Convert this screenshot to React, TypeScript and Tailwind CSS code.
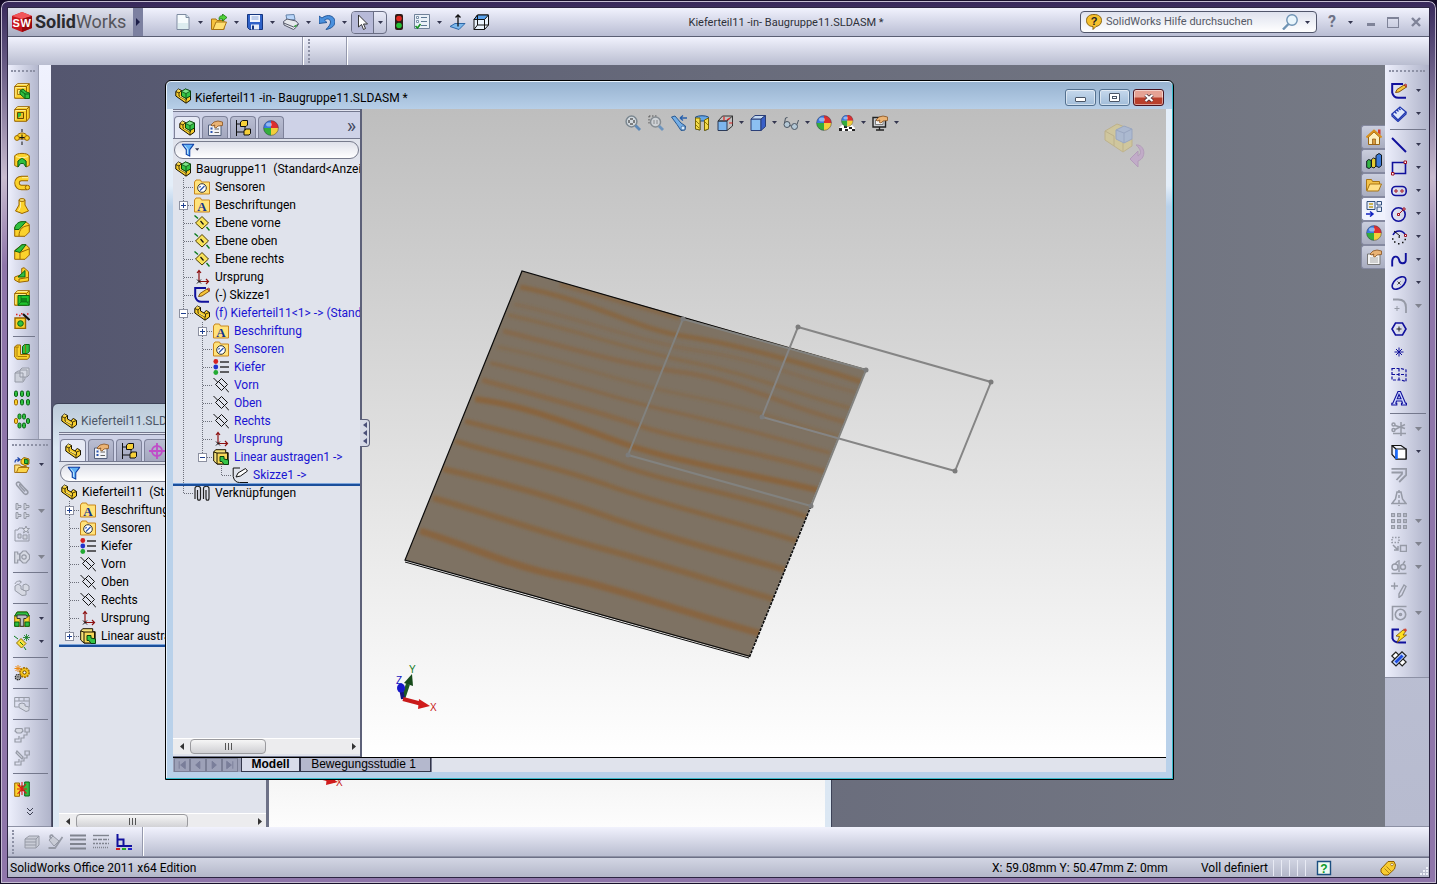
import { useState } from "react";
import type { ReactNode } from "react";

type Tool = { icon: string; label: string; menu?: boolean; disabled?: boolean } | "sep";
type Row = { level: number; icon: string; text: string; open?: boolean; linked?: boolean; last?: boolean; bar?: boolean };

const Y = { fill: "#fbd22c", stroke: "#9a6600" };
const G = { fill: "#2fbf3f", stroke: "#0b6416" };
const OFF = { fill: "none", stroke: "#969aa6" };
const NAVY = { fill: "none", stroke: "#10109c", strokeWidth: 1.6 };
const RED = { fill: "#fff", stroke: "#a01020" };

const hand = <path d="M4 5l3-3 4-1 4.5 1v3.500l-4.500.5-2 2-2-1 1-2-3 1z" fill="#eab374" stroke="#8a5320" strokeWidth=".8" />;
const ball = (
  <g>
    <path d="M8 8V.5A7.5 7.5 0 0 0 .5 8z" fill="#3a7ae0" />
    <path d="M8 8V.5A7.5 7.5 0 0 1 15.5 8z" fill="#dc2f2f" />
    <path d="M8 8H.5A7.5 7.5 0 0 0 8 15.500z" fill="#35ae3c" />
    <path d="M8 8h7.500A7.500 7.500 0 0 1 8 15.500z" fill="#f3cf3a" />
    <circle cx="8" cy="8" r="7.4" fill="none" stroke="#3b3b52" strokeWidth=".5" />
    <ellipse cx="6" cy="4.500" rx="3" ry="2" fill="#fff" opacity=".45" />
  </g>
);
const folder = <path d="M.5 3L2 1h4.5l1 2h8v12H.5z" fill="#ffe27a" stroke="#c8861c" />;
const partBody = (
  <g strokeLinejoin="round">
    <path d="M.8 3.500L3.500 1l3 1.500V6l3.500 2 1-1.500 1.500-1 3 2V12L11 15.200.8 8z" fill="#f7cd2c" stroke="#1c1500" />
    <path d="M.8 3.500L4 5v3l7 4v3M4 5l2.500-2.500M10 8l1.500 1v3M11.500 9l4-1.500" fill="none" stroke="#1c1500" strokeWidth=".8" />
    <path d="M2 3.200L3.700 1.800l1.500.8M5 8.200l5.500 3" fill="none" stroke="#fff2a0" strokeWidth=".8" />
  </g>
);
const greenCube = (
  <g strokeLinejoin="round">
    <path d="M6.500 3.500L10.500 1l5 2v5L11 10.500l-4.500-2.500z" fill="#35c447" stroke="#08400c" />
    <path d="M6.500 3.500L11 5.500l4.500-2.500-5-2z" fill="#7fe58a" stroke="#08400c" strokeWidth=".7" />
    <path d="M11 5.500v5" stroke="#08400c" strokeWidth=".8" />
  </g>
);
const plane = (
  <g fill="none" stroke="#111">
    <path d="M8.500 1.500l6 6-6 6-6-6z" />
    <path d="M.5 1l4 4M12.500 11.500l3.500 4M6 5l5 5" />
  </g>
);
const box = (
  <g strokeLinejoin="round">
    <path d="M.7 3.500L3.500.700h11.800V12l-2.800 3.300H.7z" {...Y} />
    <path d="M.7 3.500h11.800v11.800M12.500 3.500l2.800-2.800" fill="none" stroke="#9a6600" />
    <path d="M2.500 2.600L4 1.500h9.500M1.700 14V4.500h9.800" stroke="#fff3a8" fill="none" strokeWidth=".8" />
  </g>
);

const icons: Record<string, ReactNode> = {
  extrude: <g>{box}<path d="M3.500 6.500h5v5h-5z" fill="#ffe97a" stroke="#9a6600" strokeWidth=".8" /><path d="M6 8l3-2 3.500 3 3 1v5.500H11L6 11z" {...G} /><path d="M11 15.500V11h4M11 11L6.500 7.500" stroke="#0b6416" fill="none" /></g>,
  cut: <g>{box}<path d="M3.500 6.500h6v6h-6z" {...G} stroke="#6b4800" /><path d="M4 12l3-2.500V7h2v5z" fill="#eabf28" /></g>,
  revolve: <g><path d="M3 7c1-4 9-4 10 0l-1 3H4z" {...Y} /><circle cx="3" cy="9" r="2.400" {...Y} /><circle cx="13" cy="9" r="2.400" {...Y} /><path d="M8 0v3M8 5.500v5M8 12.500v3.500M5.500 8.500h5" stroke="#111" fill="none" /></g>,
  revolveCut: <g><path d="M.7 4C2 .5 14 .5 15.300 4v9.500L12 15V9L8 7 4 9v6L.7 13.500z" {...Y} /><path d="M4 15V9l4-3 4 3v6l-2.500-3.500h-3z" {...G} /><path d="M2 4.500c3 1.500 9 1.500 12 0" fill="none" stroke="#fff0a0" /></g>,
  sweep: <g fill="none"><path d="M14 3.500H7.500a4.500 4.500 0 0 0 0 9H13" stroke="#9a6600" strokeWidth="5.500" /><path d="M14.500 3.500h-7a4.500 4.500 0 0 0 0 9H13" stroke="#fbd22c" strokeWidth="3.600" /><path d="M14 2.700H8" stroke="#fff0a0" /><circle cx="13.500" cy="12.500" r="2.200" {...Y} /></g>,
  loft: <g strokeLinejoin="round"><path d="M5 2h6v5l3.500 6L8 15.500 1.500 13 5 7z" {...Y} /><ellipse cx="8" cy="2" rx="3" ry="1.400" fill="#ffeb80" stroke="#9a6600" /><path d="M6.500 4v5L4.500 13" stroke="#fff0a0" fill="none" /></g>,
  fillet: <g strokeLinejoin="round"><path d="M.7 6L6 1h6l3.300 2.500V11L11 15.300H.7z" {...Y} /><path d="M.7 8C.7 4 4 .7 8 .7h4L5 8.500H.7z" {...G} /><path d="M5 15c0-7 4-10 10-10.500" fill="none" stroke="#9a6600" /></g>,
  chamfer: <g strokeLinejoin="round"><path d="M.7 6.500L8 .7h4L15.300 4v7L11 15.300H.7z" {...Y} /><path d="M.7 7L8 .7h4L6 8.500z" {...G} /><path d="M6 8.500L15 5M6 8.500v6.500" fill="none" stroke="#9a6600" /></g>,
  rib: <g strokeLinejoin="round"><path d="M.7 10l7-2.500V1.500L10 .7l4.500 4V14L5 15.300.7 13z" {...Y} /><path d="M4 10l7-6.500V10z" {...G} /><path d="M5 15v-3l9-1.500" fill="none" stroke="#9a6600" /></g>,
  shell: <g>{box}<path d="M4 5.500h11.300v9.800H4z" fill="#1fc42c" stroke="#0b6416" /><path d="M7 8h6v4H7z" fill="#0f8a1a" /><path d="M4 15l3-3M15 15l-2-3M7 5.500V12h8" stroke="#0b6416" fill="none" strokeWidth=".7" /></g>,
  wizard: <g><path d="M1 5h10.500v10.500H1z" {...Y} strokeWidth="1.400" /><circle cx="6.500" cy="10.500" r="2.800" {...G} /><path d="M9 1l6.500 6" stroke="#111" strokeWidth="2.200" /><path d="M2 1.500h1.500M5 2.500h1.500M7 .700h1.500M13 1h1.500" stroke="#d22" strokeWidth="1.400" /></g>,
  combine: <g strokeLinejoin="round"><path d="M.7 3l2-2h3.800v9.500h8.800v3l-2 1.800H3L.7 13z" {...Y} /><path d="M8.500 2.500l2-2h4.800V7.500l-2 2H8.500z" {...G} /><path d="M11.500.5V9M3 3v10M.7 3H5M4 12.500h9" stroke="#9a6600" fill="none" strokeWidth=".8" /></g>,
  joinOff: <g {...OFF}><path d="M1 6l3-2h7v8l-2 3H1z" fill="#ccd0da" /><path d="M6 3l2-2h7v7l-2 2H6z" fill="#d5d8e2" /><path d="M1 6h8v8M6 3h7v7" /></g>,
  linear: <g>{[.5, 6.5, 12.5].map((x) => <g key={x}><rect x={x} y="1" width="3" height="5.500" rx="1.400" {...G} /><rect x={x} y="9.500" width="3" height="5.500" rx="1.400" {...(x === .5 ? Y : G)} /></g>)}</g>,
  circular: <g>{[[4, 1], [8.5, 1], [.5, 5.5], [12.5, 5.5], [4, 10], [8.5, 10]].map(([x, y]) => <rect key={`${x}-${y}`} x={x} y={y} width="3" height="5" rx="1.400" {...(x === .5 ? Y : G)} />)}</g>,
  insertPart: <g><path d="M.7 8h5l1 1.500h6v6h-12z" fill="#ffe27a" stroke="#a87414" /><path d="M2.500 15.500l2-5H15l-2.500 5z" fill="#fbd54a" stroke="#a87414" /><path d="M7 3l3-2.500L15 2v5l-4 1.500L7 6.500z" {...Y} /><path d="M10.500 2l3.500 1v3.500h-3.500z" {...G} /><path d="M1 5.500C1 3 2 2.500 5 2.500M3.500.5l2.500 2-2.500 2" fill="none" stroke="#1740a8" strokeWidth="1.200" /></g>,
  clipOff: <path d="M13 11L6 3C4 1 1 3 3 5.500l7 8c2 2 5 0 3.500-2.500L7.500 5C6 3.800 5 5 6 6l5 5.500" {...OFF} strokeWidth="1.500" />,
  patternOff: <g {...OFF} fill="#d0d3de">{[[1, 0], [9, 0], [1, 9], [9, 9]].map(([x, y]) => <path key={`${x}-${y}`} d={`M${x + 1} ${y + .5}h2v2h3v2h-3v2h-2z`} />)}</g>,
  smartOff: <g {...OFF}><path d="M1 4h3l1-2h4M1 4v11h14V8" /><path d="M4 8h3v4H4zM9 9h4v4H9z" fill="#d0d3de" /><path d="M12 0l1 2.500h2.500l-2 1.500 1 3-2.500-2-2.500 2 1-3-2-1.500H11z" fill="#e3e5ee" /></g>,
  moveOff: <g {...OFF} fill="#d6d9e3" strokeWidth="1.200"><path d="M.7 3h3v2h2v6h-2v3h-3z" /><path d="M6 5l3-3h3l3.500 4v4L12 14H9l-3-3z" /><circle cx="10" cy="8" r="2.200" /></g>,
  rotateOff: <g {...OFF} fill="#d6d9e3"><path d="M1 6l3-2 3 2v3l5 2v4l-4 .5-7-5z" /><path d="M9 5l3-1 3 2v4l-3 1-3-1z" /><path d="M1 4c1-3 4-3.500 6-2M5.500.5L7.500 2l-2 1.500" fill="none" /></g>,
  hammer: <g><path d="M.7 5l2.500-4h10L15.300 5v10.300H.7z" {...Y} /><path d="M.7 5l2.500-4h10L15.300 5zM.7 11H5v4.300H.7zM11 11h4.300v4.300H11z" {...G} /><path d="M3 4h9l1.500 2-1.500 1.500H9.800v7.800H6.200V7.500H3z" fill="#b9bdc5" stroke="#333" /></g>,
  refPlane: <g><path d="M7 4.500l5 5L7.500 14l-5-5z" fill="#f8e040" stroke="#8f6f00" /><path d="M0 2l4 3M10 13l2 3M6 8l3 3" stroke="#0c7a1b" /><path d="M12.500 0v7M9 3.500h7M10 1l5 5M15 1l-5 5" stroke="#0c7a1b" strokeWidth=".8" /></g>,
  gears: <g><circle cx="10.500" cy="7.500" r="4.600" fill="#f8c820" stroke="#a87400" strokeWidth="1.800" strokeDasharray="2 .8" /><circle cx="10.500" cy="7.500" r="1.600" fill="#fff" stroke="#5d4200" /><circle cx="4" cy="12.200" r="2.600" fill="#ddd" stroke="#222" strokeWidth="1.400" strokeDasharray="1.400 .6" /><circle cx="4" cy="12.200" r="1" fill="#fff" stroke="#222" strokeWidth=".7" /><path d="M4 0v7M.5 3.500h7M1.500 1l5 5M6.500 1l-5 5" stroke="#ee8a12" /></g>,
  tableOff: <g {...OFF}><path d="M.7 1.500h14.600v3.500H.7zM.7 5v6h4M5 1.500V5M10 1.500V5M15.300 5v6" /><path d="M5 8l3-1 3 1v2l4 1v3.500l-3 1-7-4z" fill="#d6d9e3" /></g>,
  explodeOff: <g {...OFF} strokeWidth="1.200"><path d="M2 1.500h6l1 2.500-2 2H3L1 4z" fill="#d6d9e3" /><path d="M11 1h4.300v4H11zM13 5v3h-3v3H7v4H1v-3h4V9" /></g>,
  explodeLineOff: <g {...OFF} strokeWidth="1.200"><path d="M3 1l6 6-1 2-6-6z" fill="#d6d9e3" /><path d="M11 1h4.300v4H11zM13 5v3h-3v3H7v4H1v-3h4V9" /></g>,
  interference: <g><path d="M.7 2h4.800v3H8v5H5.500v5.300H.7z" {...Y} /><path d="M15.300 1h-4.600v4H8v4.500h2.700v5.500h4.600z" {...G} /><path d="M3.500 3.500l9 9M12 3l-8.500 10M8 1v13M3 8h10" stroke="#e01818" strokeWidth="1.100" /></g>,
  sketch: <g><path d="M12 1H1.200v8.500c.8 3.500 3 5.300 6.300 5.300H15" {...NAVY} strokeWidth="2" /><path d="M4.500 9.500L6 6.500 13 2l2.500 2L8 9z" fill="#f6c63a" stroke="#7a4a00" strokeWidth=".9" /><path d="M13 2l2.500 2 .5-2-1.500-1z" fill="#e35b50" stroke="#7a1a10" strokeWidth=".5" /></g>,
  dimension: <g fill="none" stroke="#2038b0" strokeWidth="1.300"><path d="M1 8l8-7 6 5-8 8z" fill="#dfe8fa" /><path d="M1 8v2l6 5.500L15 8V6" /><path d="M4 6l1.500 1.500M6 4l1.500 1.500M8 2.500L9.500 4" /></g>,
  line: <path d="M1 1l14 14" {...NAVY} strokeWidth="2" />,
  rect: <g><path d="M1.500 2.500h13v11h-13z" {...NAVY} /><path d="M13 1h2.500v2.500H13zM.5 12.500H3V15H.5z" {...RED} /></g>,
  slot: <g><rect x=".8" y="3.500" width="14.400" height="9" rx="4" {...NAVY} /><path d="M4 7h2v2H4zM10 7h2v2h-2z" {...RED} /></g>,
  circle: <g><circle cx="7.500" cy="8.500" r="6.700" {...NAVY} /><path d="M7.500 8.500L13 3" stroke="#a01020" /><path d="M6.500 7.500h2v2h-2zM12 2h2v2h-2z" {...RED} /></g>,
  arc: <g><path d="M2 6c3-6 11-5 12.500 1" {...NAVY} /><path d="M3 2l6 5" stroke="#111" fill="none" /><path d="M13.500 5.500h2v2h-2z" {...RED} /><path d="M1 10h1.500M3 13h1.500M7 14.800h1.500M11 13.500h1.500M13.500 10.500H15M7.500 8h1.500" stroke="#111" strokeWidth="1.600" /></g>,
  spline: <path d="M1.200 14.500V9C1.500 4 6.500 3 8 7.500 9 13 14.800 12 14.800 8V1" {...NAVY} strokeWidth="1.900" />,
  ellipse: <g><ellipse cx="8" cy="8" rx="8" ry="4.600" transform="rotate(-40 8 8)" {...NAVY} /><path d="M6.500 6.500l3 3M9.500 6.500l-3 3" stroke="#222" strokeWidth=".8" /></g>,
  filletOff: <g {...OFF}><path d="M2 1.500h5c5 0 8 3 8 8V15" strokeWidth="1.800" /><path d="M6 8v5M3.500 10.500h5" /></g>,
  polygon: <g><path d="M4.500 2h7l3.500 6-3.500 6h-7L1 8z" {...NAVY} /><path d="M8 5.500v5M5.500 8h5" stroke="#222" /></g>,
  point: <path d="M8 3.500v9M3.500 8h9M5 5l6 6M11 5l-6 6" stroke="#10109c" />,
  construct: <path d="M1 1.500h9l5 1.500v11.500L10 13H1zM1 7.500h14M8 1.500V13" fill="none" stroke="#10109c" strokeWidth="1.200" strokeDasharray="3 1.500" />,
  text: <path d="M.8 15v-1.800h1L7 1.500h2.500L14.500 13.200h1V15h-5v-1.800h1L10.800 11H5.500l-.7 2.200h1V15zM6.300 8.800h3.700L8 4.500z" fill="#cfd8ff" stroke="#10109c" strokeWidth="1.100" />,
  trimOff: <g {...OFF} strokeWidth="1.500"><path d="M4 4.500l10 3M4 8.500l10-5M10 1v14M2 12.500h13" /><circle cx="2.500" cy="3.500" r="1.500" /><circle cx="2.500" cy="9" r="1.500" /></g>,
  convert: <g stroke="#111" strokeWidth="1.200"><path d="M1 1.500h9L15 5v10H5L1 10.500z" fill="#eef1fb" /><path d="M5 5h10v10H5zM1 1.500L5 5" fill="#fff" /><path d="M5.500 5.500v9.500" stroke="#1b6bff" strokeWidth="2.600" /></g>,
  offsetOff: <path d="M.5 1.800h14.700V8l-7 7M.5 5.500H11V7l-5.500 6" {...OFF} strokeWidth="1.800" />,
  mirrorOff: <g {...OFF} strokeWidth="1.500"><path d="M6 2h4l1.500 7L15 13.500H1L4.500 9z" /><path d="M8 0v16" strokeDasharray="3 2" /></g>,
  gridOff: <g {...OFF} strokeWidth="1.400">{[1, 7, 13].map((x) => [1, 7, 13].map((y) => <rect key={`${x}-${y}`} x={x - .3} y={y - .3} width="2.700" height="2.700" />))}</g>,
  moveEntOff: <g {...OFF} strokeWidth="1.500"><path d="M1 1.500h7v5H1z" strokeDasharray="1.500 1.500" /><path d="M9.500 9.500h6v6h-6zM2 9l5 5M7 10v4H3" /></g>,
  relationOff: <g {...OFF} strokeWidth="1.400"><circle cx="4" cy="8" r="3" /><circle cx="12" cy="8" r="2.500" /><path d="M.5 14.500h15M8 13V1M4 5l3-3M12 5l2-3" /></g>,
  repairOff: <g {...OFF} strokeWidth="1.400"><path d="M0 4h7M3.500.5v7M13 3l2 1.500L11 13l-3 2.500V12z" /></g>,
  snapOff: <g {...OFF} strokeWidth="1.600"><path d="M1.500 15.500v-14H15.500" /><circle cx="9.500" cy="9.500" r="5.200" /><circle cx="9.500" cy="9.500" r="1" /></g>,
  rapid: <g><path d="M8 1.500H1.500v9c1 3 3 4 7 4H15" {...NAVY} strokeWidth="2" /><path d="M12 2L5 8l3.500.5L6 14.500 15.500 7H12l3-4z" fill="#ffdf20" stroke="#7a5200" strokeWidth=".8" /><path d="M12 1l3-.5 1 2-2 1.500z" fill="#d04838" /></g>,
  instant: <g strokeWidth="1.200"><path d="M.8 5l4-4 10.400 10-4 4z" fill="#fff" stroke="#222" /><path d="M.8 11L11 .800l4.200 4L5 15z" fill="#c7d9ff" stroke="#222" /><path d="M4.500 11.500l7-7" stroke="#1b4be0" strokeWidth="2.800" /></g>,
  shadeOff: <g {...OFF}><path d="M1 5l4-3h10v9l-3 3H1z" fill="#c9ccd6" /><path d="M1 5h11v9M12 5l3-3M1 8h11M1 11h11" /></g>,
  paintOff: <g {...OFF}><path d="M2 6l4-4 6 5-5 5z" fill="#c9ccd6" /><path d="M6 2C4 0 2 2 4 5M15.500 3L8 14H1.500" strokeWidth="1.800" /></g>,
  weightOff: <path d="M0 1.500h16M0 5.500h16M0 10h16M0 14.500h16" stroke="#80848f" strokeWidth="2.200" />,
  styleOff: <g stroke="#80848f" fill="none" strokeWidth="1.400"><path d="M0 1.500h16" /><path d="M0 5.500h16" strokeDasharray="4 1" /><path d="M0 9.500h16" strokeDasharray="2 1" /><path d="M0 13.500h16" strokeDasharray="1 1" /></g>,
  colorMode: <g><path d="M1.500 0v12H16M1.500 5.500h6V12" fill="none" stroke="#10109c" strokeWidth="2" /><path d="M0 15h4" stroke="#c22" strokeWidth="2" /><path d="M6 15h4" stroke="#2a2" strokeWidth="2" /><path d="M12 15h4" stroke="#22c" strokeWidth="2" /></g>,
  fileNew: <g><path d="M2 .5h9l3 3v12H2z" fill="#f6fbfd" stroke="#7d8ba0" /><path d="M11 .5v3h3" fill="#cfe0ea" stroke="#7d8ba0" /><path d="M3 9h10v6H3z" fill="#dcecef" /></g>,
  fileOpen: <g><path d="M.5 5h4.500l1 1.500h7v9H.5z" fill="#f6c23e" stroke="#a87414" /><path d="M2 15.500L5 8h10.500l-3 7.500z" fill="#ffdf72" stroke="#a87414" /><path d="M8 5.500c0-3.500 2-4 3.500-3.700V0l4.500 3.500-4.500 3.500V5c-1.500-.2-2.500 0-3.500.5z" fill="#4ed238" stroke="#187512" strokeWidth=".8" /></g>,
  fileSave: <g><path d="M.5.5h15v15h-13l-2-2z" fill="#2f62c8" stroke="#14357f" /><path d="M3 1h10v7H3z" fill="#f2f6ff" /><path d="M4.500 3h7M4.500 5h7" stroke="#8aa4d8" /><path d="M4 10.500h8v5H4z" fill="#e6ecf6" /><path d="M5 11.500h2v4H5z" fill="#14357f" /></g>,
  print: <g><path d="M3 1l8-.5 1 5-8 1z" fill="#b9d6fb" stroke="#6583a8" /><path d="M.5 7.500L4 5l9 2 2.500 3-2 3-3 2.500L1 11z" fill="#e6e8ec" stroke="#55596a" /><path d="M.7 9l10 4 4.800-3" stroke="#55596a" fill="none" /><path d="M11.500 12.500l2-1" stroke="#37b23e" strokeWidth="1.500" /></g>,
  undo: <path d="M0 2v7.500l8-1-2.500-2.300C8 4 11.500 5 11.500 8c0 3-2 4.500-4.500 7.500 6-1 9-4 9-8C15.500 1.500 8.500-.5 3 4z" fill="#4a90dd" stroke="#1d4f92" strokeWidth=".9" />,
  pointer: <path d="M3.500 1v12l3-2.500 2 5 2-1-2-4.500h4z" fill="#fff" stroke="#333" />,
  traffic: <g><rect x="4" y="0" width="8" height="16" rx="2" fill="#2d1a16" /><circle cx="8" cy="4.500" r="2.800" fill="#e02820" /><circle cx="8" cy="11.500" r="2.800" fill="#24c234" /></g>,
  options: <g><path d="M.5.5h15v14H.5z" fill="#e9f0f8" stroke="#6f8199" /><path d="M7 3.500h6M7 7.500h6M7 11.500h6" stroke="#5d7894" /><path d="M2.500 2.500h2v2h-2zM2.500 6.500h2v2h-2z" fill="#fff" stroke="#5d7894" strokeWidth=".8" /><path d="M1.500 12l2 2 3-4" stroke="#169022" strokeWidth="1.600" fill="none" /></g>,
  normalTo: <g><path d="M0 12.500l5-3h10l-6 6z" fill="#7cb8ec" stroke="#2f68a8" /><path d="M8 12.500V1M5.500 3.500L8 1l2.500 2.500" stroke="#111" fill="none" strokeWidth="1.300" /></g>,
  viewCube: <g fill="none" stroke="#111" strokeLinejoin="round"><path d="M4.500 1h11v10l-4 4.500H1v-10z" fill="#eaf2fc" /><path d="M4.500 1h11l-4 4.500H1z" fill="#5aa2ec" /><path d="M4.500 1v10h11M1 15.500L4.500 11M11.500 5.500v10" /></g>,
  zoomFit: <g><circle cx="6.500" cy="6.500" r="5.400" fill="#d3d9de" stroke="#7b8790" strokeWidth="1.500" /><path d="M5 4h3M5 9h3M4 5v3M9 5v3" stroke="#222" /><path d="M10.500 10.500l4.500 4.500" stroke="#5c88b8" strokeWidth="2.800" /></g>,
  zoomArea: <g><path d="M1 1h8M1 1v8" stroke="#555" strokeDasharray="1.500 1.500" fill="none" /><circle cx="7.500" cy="7" r="5" fill="#ced2d6" stroke="#858c92" strokeWidth="1.500" /><path d="M6 5.500v4M9 5.500v4" stroke="#444" strokeDasharray="1 1" /><path d="M11 11l4 4" stroke="#6d94bd" strokeWidth="2.800" /></g>,
  prevView: <g><path d="M.5 2L4 1l6 7 4.500 3-.5 4-4 .5-4-6z" fill="#74aee6" stroke="#2a5a92" /><path d="M9 3h7M9 3l3-2.500M9 3l3 2.500" stroke="#2a62ad" strokeWidth="1.300" /><circle cx="12" cy="13" r="2" fill="#d7ecff" stroke="#2a5a92" strokeWidth=".7" /></g>,
  section: <g><path d="M1.500 2C5 .3 11 .3 14.500 2v12l-4 1.500V6H6v9l-4.500-1z" fill="#65a6e6" stroke="#1f4c85" /><path d="M1.500 3H6v12l-4.500-1zM10.500 5l4-2v11l-4 1.500z" fill="#f4dc48" stroke="#7a6400" /><path d="M2 6l3 3M2 10l3 3M11 7l3 3" stroke="#7a6400" strokeWidth=".8" /></g>,
  orient: <g><path d="M1 6h9v9.500H1z" fill="#7db6ee" stroke="#2b3a58" /><path d="M1 6l4.500-5h10L10 6zM15.500 1v10L10 15.500" fill="none" stroke="#333" /><path d="M7 1.500v4M12 8h3.500M10 5l3-2" stroke="#d22" strokeWidth="1.200" /></g>,
  display: <g strokeLinejoin="round"><path d="M1 4h10v11.500H1z" fill="#8cc0f2" stroke="#2b3f78" /><path d="M1 4l4-3.500h10.500L11 4z" fill="#c4daf2" stroke="#2b3f78" /><path d="M11 4l4.500-3.500v11L11 15.500z" fill="#3a60c8" stroke="#2b3f78" /></g>,
  glasses: <g fill="#b4c8d6" stroke="#4a5562"><circle cx="4" cy="9.500" r="3" /><circle cx="11.500" cy="11.500" r="3" /><path d="M1.500 8L2.500 3l2-.5M14 9.500L15.500 5M6.800 10.500l1.500.5" fill="none" /></g>,
  ball,
  scene: <g><path d="M0 13l3-3h10l3 3v3H0z" fill="#fff" /><path d="M0 13h3v3H0zM5 10.500h3V13H5zM6 14h3v2H6zM10 12h3v2h-3zM13 14h3v2h-3z" fill="#222" /><g transform="translate(2 -.5) scale(.78)">{ball}</g></g>,
  viewSet: <g><path d="M1 2.500h12.500V12H1z" fill="#c9ccd0" stroke="#222" strokeWidth="1.400" /><path d="M3.500 5h7.500v4.500H3.500z" fill="#f4f4f4" stroke="#555" strokeWidth=".7" /><path d="M4 15h8M7.500 12v2.500" stroke="#222" strokeWidth="1.300" />{hand}</g>,
  assembly: <g>{partBody}{greenCube}</g>,
  part: partBody,
  propTab: <g><path d="M1.500 5h12.500v10.500H1.500z" fill="#f2f3f6" stroke="#53607c" /><path d="M3.500 8.500h2M3.500 12h2" stroke="#2a55b0" strokeWidth="1.800" /><path d="M7.500 9h4.500M7.500 12.500h4.500" stroke="#666" />{hand}</g>,
  configTab: <g><path d="M1.500 0v16M1.500 4H6M1.500 12H9" stroke="#111" fill="none" /><path d="M5.500 2L7.500.5h5V5L11 6.500H5.500zM9 10.500L11 9h4.500v4.500L14 15H9z" fill="#f7d038" stroke="#111" /><path d="M10 6.500v4" stroke="#111" /></g>,
  dimTab: <g fill="none" stroke="#c04cc8" strokeWidth="1.800"><circle cx="8" cy="8" r="5" /><path d="M8 0v16M0 8h16" /></g>,
  funnel: <g><path d="M1.500 1.500h13L10 7.500v7.500L6 13V7.500z" fill="#5fb0f5" stroke="#0c3da4" strokeWidth="1.200" strokeLinejoin="round" /><path d="M4 3l3.500 4v5.500" stroke="#d8f0ff" fill="none" /></g>,
  sensors: <g>{folder}<circle cx="8" cy="9" r="4.300" fill="#fff" stroke="#333" /><path d="M5.500 8.500l1-1.500M6 11.500l4.500-4.500" stroke="#2a55b0" strokeWidth="1.300" /></g>,
  notes: <g>{folder}<text x="8" y="13.500" textAnchor="middle" fontSize="13" fontWeight="bold" fill="#14348c" fontFamily="Liberation Serif, serif">A</text></g>,
  datum: <g><path d="M8 1.500l6.500 6.500L8 14 1.500 8z" fill="#f8e25a" stroke="#4d3d00" /><path d="M6.500 6l3 3.500" stroke="#111" strokeWidth="1.200" /><path d="M.5.5L4 3.500M12.500 12l3 3.500" stroke="#0c7a1b" strokeWidth="1.400" /></g>,
  origin: <g><path d="M5 12.500V1.500M3 4l2-2.500L7 4M5 12.500h9.500M12 10l2.500 2.500L12 15" fill="none" stroke="#8c1010" strokeWidth="1.200" /><path d="M3 10.500l4 4M7 10.500l-4 4" stroke="#111" /></g>,
  plane,
  material: <g><circle cx="2.800" cy="2.500" r="2.400" fill="#d42222" /><circle cx="2.800" cy="8" r="2.400" fill="#2233cc" /><circle cx="2.800" cy="13.500" r="2.400" fill="#22aa33" /><path d="M7 3h9M7 8h9M7 13h9" stroke="#333" strokeWidth="1.600" /></g>,
  feature: <g strokeLinejoin="round"><path d="M.7 3l2-2.300h10v3h2.500V15H4L.7 12z" fill="#f5e27a" stroke="#1c1500" /><path d="M4 4h10.500v11H4zM.7 3L4 4" fill="#f8d85a" stroke="#1c1500" /><path d="M7 7.500h4v2.500l4.500 1v4.500H11L9 12.500H7z" fill="#35c447" stroke="#08400c" /></g>,
  sketchGray: <g fill="none" stroke="#111"><path d="M8 1H1.200v8.500c.8 4 3 6 6.300 6H16" /><path d="M4 10l2-4 7.500-4.500L15.500 4 8.500 9z" fill="#fff" /></g>,
  mates: <g fill="none" stroke="#222" strokeWidth="1.200"><path d="M1 14V3.500C1 .5 6.500.5 6.500 3.500V13c0 3-3 3-3 0V5M9.500 14V3.500c0-3 5.500-3 5.500 0V13c0 3-3 3-3 0V5" /></g>,
  home: <g><path d="M2.500 8v7.500h11V8L8 3z" fill="#fdf0c0" stroke="#9a6410" /><path d="M.5 8.500L8 1.500l7.500 7" fill="none" stroke="#d8901c" strokeWidth="2" /><path d="M6.500 10h3v5.500h-3z" fill="#d89a3c" stroke="#8a5410" strokeWidth=".7" /><path d="M12 .5h2.500V6L12 3.500z" fill="#d63a2a" /></g>,
  library: <g stroke="#101820"><path d="M.7 8l2-1.500 2.500 1V14l-2 1.500-2.500-1z" fill="#35b544" /><path d="M5.500 6.500l2-1.500 2.500 1V13l-2 2-2.500-1z" fill="#e6cb30" /><path d="M10 2.500l3-2 2.500 1.500v10.500L13 14.500 10 13z" fill="#3a78d8" /></g>,
  explorer: <g><path d="M.5 13.500V2.500h5l1 2h7v3" fill="#f3c24a" stroke="#a87414" /><path d="M.8 14l3-7h11.700l-3 7z" fill="#ffe08a" stroke="#a87414" /></g>,
  palette: <g><path d="M1 .5h8v8H1zM11 .5h4.500v3.500H11zM11 6h4.500v4.500H11z" fill="#e8edf8" stroke="#33507e" /><path d="M3 3h4M3 6h4" stroke="#c0a020" strokeWidth="1.400" /><path d="M0 13h6M4 10.500L7 13l-3 2.500" stroke="#1022c0" strokeWidth="1.500" fill="none" /></g>,
  props: <g><path d="M1.500 5h12.500v10.500H1.500z" fill="#f4f4f4" stroke="#777" /><path d="M4 9h8M4 11h8M4 13h8" stroke="#999" strokeWidth=".8" />{hand}</g>,
  helpBall: <g><path d="M8 .5c5 0 7.500 2.500 7.500 6s-2.500 5.500-5.500 6l-3 3v-3C3 12.500.5 10 .5 6.500S3 .5 8 .5z" fill="#f6c02c" stroke="#8a6410" /><text x="8" y="11" textAnchor="middle" fontSize="11" fontWeight="bold" fill="#222" fontFamily="Liberation Sans, sans-serif">?</text></g>,
  search: <g><circle cx="10" cy="6" r="5.200" fill="#e9f5fc" stroke="#6f93b4" strokeWidth="1.400" /><path d="M6.500 10l-5.500 5.500" stroke="#6f93b4" strokeWidth="2.400" /></g>,
  tag: <g><path d="M1 9l7-7.500h6L15.500 5l-1 4L8 15H4L1 12z" fill="#f8cc30" stroke="#8f5f00" /><circle cx="12" cy="4.500" r="1.300" fill="#fff" stroke="#8f5f00" strokeWidth=".7" /><path d="M4.500 8.500L9 13M6.500 6.500L11 11" stroke="#a87a10" strokeWidth=".9" /></g>,
  helpBox: <g><path d="M1.500 1.500h13v13h-13z" fill="#eefaf0" stroke="#1c4f80" strokeWidth="1.400" /><text x="8" y="12.500" textAnchor="middle" fontSize="12" fontWeight="bold" fill="#0c9a2a" fontFamily="Liberation Sans, sans-serif">?</text></g>,
};

function Icon({ name, className = "w-4 h-4" }: { name: string; className?: string }) {
  return (
    <svg viewBox="0 0 16 16" className={`${className} shrink-0`} aria-hidden="true" fill="none">
      {icons[name]}
    </svg>
  );
}

function Arrow({ off = false }: { off?: boolean }) {
  return (
    <svg viewBox="0 0 7 4" className={off ? "w-[7px] h-1" : "w-[5px] h-[3px]"} aria-hidden="true">
      <path d="M0 0h7L3.500 4z" fill={off ? "#80838f" : "#34364f"} />
    </svg>
  );
}

const leftTop: Tool[] = [
  { icon: "extrude", label: "Linear austragen" },
  { icon: "cut", label: "Linear schneiden" },
  { icon: "revolve", label: "Rotieren" },
  { icon: "revolveCut", label: "Schnitt rotieren" },
  { icon: "sweep", label: "Austragung" },
  { icon: "loft", label: "Ausformung" },
  { icon: "fillet", label: "Verrundung" },
  { icon: "chamfer", label: "Fase" },
  { icon: "rib", label: "Rippe" },
  { icon: "shell", label: "Wandung" },
  { icon: "wizard", label: "Bohrungsassistent" },
  "sep",
  { icon: "combine", label: "Kombinieren" },
  { icon: "joinOff", label: "Verbinden", disabled: true },
  { icon: "linear", label: "Lineares Muster" },
  { icon: "circular", label: "Kreismuster" },
];

const leftBottom: Tool[] = [
  { icon: "insertPart", label: "Komponente einfügen", menu: true },
  { icon: "clipOff", label: "Verknüpfung", disabled: true },
  { icon: "patternOff", label: "Komponentenmuster", menu: true, disabled: true },
  { icon: "smartOff", label: "Smarte Verbindungselemente", disabled: true },
  { icon: "moveOff", label: "Komponente verschieben", menu: true, disabled: true },
  "sep",
  { icon: "rotateOff", label: "Komponenten anzeigen", disabled: true },
  "sep",
  { icon: "hammer", label: "Baugruppen-Features", menu: true },
  { icon: "refPlane", label: "Referenzgeometrie", menu: true },
  "sep",
  { icon: "gears", label: "Neue Bewegungsstudie" },
  "sep",
  { icon: "tableOff", label: "Stückliste", disabled: true },
  "sep",
  { icon: "explodeOff", label: "Explosionsansicht", disabled: true },
  { icon: "explodeLineOff", label: "Explosionslinie", disabled: true },
  "sep",
  { icon: "interference", label: "Interferenzprüfung" },
];

const rightTools: Tool[] = [
  { icon: "sketch", label: "Skizze", menu: true },
  { icon: "dimension", label: "Intelligente Bemaßung", menu: true },
  "sep",
  { icon: "line", label: "Linie", menu: true },
  { icon: "rect", label: "Rechteck", menu: true },
  { icon: "slot", label: "Langloch", menu: true },
  { icon: "circle", label: "Kreis", menu: true },
  { icon: "arc", label: "Bogen", menu: true },
  { icon: "spline", label: "Spline", menu: true },
  { icon: "ellipse", label: "Ellipse", menu: true },
  { icon: "filletOff", label: "Skizzenverrundung", menu: true, disabled: true },
  { icon: "polygon", label: "Polygon" },
  { icon: "point", label: "Punkt" },
  { icon: "construct", label: "Ebene" },
  { icon: "text", label: "Text" },
  "sep",
  { icon: "trimOff", label: "Trimmen", menu: true, disabled: true },
  { icon: "convert", label: "Elemente übernehmen", menu: true },
  { icon: "offsetOff", label: "Offset", disabled: true },
  { icon: "mirrorOff", label: "Spiegeln", disabled: true },
  { icon: "gridOff", label: "Lineares Skizzenmuster", menu: true, disabled: true },
  { icon: "moveEntOff", label: "Elemente verschieben", menu: true, disabled: true },
  { icon: "relationOff", label: "Beziehungen", menu: true, disabled: true },
  { icon: "repairOff", label: "Skizze reparieren", disabled: true },
  { icon: "snapOff", label: "Schnellfang", menu: true, disabled: true },
  { icon: "rapid", label: "Schnellskizze" },
  { icon: "instant", label: "Instant3D" },
];

const viewTools = [
  { icon: "zoomFit", label: "In Fenster zoomen" },
  { icon: "zoomArea", label: "Ausschnitt vergrößern" },
  { icon: "prevView", label: "Vorherige Ansicht" },
  { icon: "section", label: "Schnittansicht" },
  { icon: "orient", label: "Ansichtsausrichtung", menu: true },
  { icon: "display", label: "Anzeigeart", menu: true },
  { icon: "glasses", label: "Ausblenden", menu: true },
  { icon: "ball", label: "Erscheinungsbild" },
  { icon: "scene", label: "Bühne", menu: true },
  { icon: "viewSet", label: "Ansichtseinstellungen", menu: true },
];

const fileTools = [
  { icon: "fileNew", label: "Neu" },
  { icon: "fileOpen", label: "Öffnen" },
  { icon: "fileSave", label: "Speichern" },
  { icon: "print", label: "Drucken" },
  { icon: "undo", label: "Rückgängig" },
];

const assemblyTree: Row[] = [
  { level: 0, icon: "assembly", text: "Baugruppe11  (Standard<Anzei" },
  { level: 1, icon: "sensors", text: "Sensoren" },
  { level: 1, icon: "notes", text: "Beschriftungen", open: false },
  { level: 1, icon: "datum", text: "Ebene vorne" },
  { level: 1, icon: "datum", text: "Ebene oben" },
  { level: 1, icon: "datum", text: "Ebene rechts" },
  { level: 1, icon: "origin", text: "Ursprung" },
  { level: 1, icon: "sketch", text: "(-) Skizze1" },
  { level: 1, icon: "part", text: "(f) Kieferteil11<1> -> (Stand", open: true, linked: true },
  { level: 2, icon: "notes", text: "Beschriftung", open: false, linked: true },
  { level: 2, icon: "sensors", text: "Sensoren", linked: true },
  { level: 2, icon: "material", text: "Kiefer", linked: true },
  { level: 2, icon: "plane", text: "Vorn", linked: true },
  { level: 2, icon: "plane", text: "Oben", linked: true },
  { level: 2, icon: "plane", text: "Rechts", linked: true },
  { level: 2, icon: "origin", text: "Ursprung", linked: true },
  { level: 2, icon: "feature", text: "Linear austragen1 ->", open: true, linked: true, last: true },
  { level: 3, icon: "sketchGray", text: "Skizze1 ->", linked: true, last: true, bar: true },
  { level: 1, icon: "mates", text: "Verknüpfungen", last: true },
];

const partTree: Row[] = [
  { level: 0, icon: "part", text: "Kieferteil11  (Stand" },
  { level: 1, icon: "notes", text: "Beschriftung", open: false },
  { level: 1, icon: "sensors", text: "Sensoren" },
  { level: 1, icon: "material", text: "Kiefer" },
  { level: 1, icon: "plane", text: "Vorn" },
  { level: 1, icon: "plane", text: "Oben" },
  { level: 1, icon: "plane", text: "Rechts" },
  { level: 1, icon: "origin", text: "Ursprung" },
  { level: 1, icon: "feature", text: "Linear austragen1", open: false, last: true, bar: true },
];

function ToolColumn({ tools }: { tools: Tool[] }) {
  return (
    <>
      {tools.map((t, i) =>
        t === "sep" ? (
          <div key={i} className="flex h-2 items-center pl-[5px] pr-[3px]">
            <div className="h-px w-full bg-[#74788c]" />
          </div>
        ) : (
          <div key={i} className="flex h-[23px] items-center pl-0.5">
            <button aria-label={t.label} disabled={t.disabled} className="flex h-full w-6 shrink-0 items-center justify-center">
              <Icon name={t.icon} />
            </button>
            {t.menu && (
              <button aria-label={`${t.label} Menü`} disabled={t.disabled} className="flex h-full w-3.5 items-center justify-center">
                <Arrow off={t.disabled} />
              </button>
            )}
          </div>
        )
      )}
    </>
  );
}

// one 19px column of the dotted tree lines
function Guide({ kind }: { kind: "pass" | "branch" | "end" | "blank" }) {
  return (
    <svg viewBox="0 0 19 18" className="h-[18px] w-[19px] shrink-0" aria-hidden="true" shapeRendering="crispEdges">
      {kind !== "blank" && <path d={kind === "end" ? "M8.5 0v9" : "M8.5 0v18"} stroke="#6c6f7a" strokeDasharray="1 1" />}
      {(kind === "branch" || kind === "end") && <path d="M9 9.5h10" stroke="#6c6f7a" strokeDasharray="1 1" />}
    </svg>
  );
}

function Expander({ open, last, label, onToggle }: { open: boolean; last?: boolean; label: string; onToggle: () => void }) {
  return (
    <button aria-label={label} aria-expanded={open} onClick={onToggle} className="shrink-0">
      <svg viewBox="0 0 19 18" className="h-[18px] w-[19px]" shapeRendering="crispEdges">
        <path d={last ? "M8.5 0v9M9 9.5h10" : "M8.5 0v18M9 9.5h10"} stroke="#6c6f7a" strokeDasharray="1 1" />
        <rect x="4.5" y="5.5" width="8" height="8" fill="#fff" stroke="#8c90a0" />
        <path d={open ? "M6 9.5h5" : "M6 9.5h5M8.5 7v5"} stroke="#1f3f8f" />
      </svg>
    </button>
  );
}

function Tree({ rows }: { rows: Row[] }) {
  const [closed, setClosed] = useState<number[]>(rows.flatMap((r, i) => (r.open === false ? [i] : [])));
  const toggle = (i: number) => setClosed((c) => (c.includes(i) ? c.filter((n) => n !== i) : [...c, i]));

  return (
    <ul className="overflow-hidden pb-1">
      {rows.map((r, i) => (
        <li key={i} className={r.bar ? "relative" : ""}>
          <div className="flex h-[18px] items-center pl-0.5">
            {r.level > 1 && <Guide kind="pass" />}
            {r.level > 2 && <Guide kind="blank" />}
            {r.level > 0 &&
              (r.open === undefined ? (
                <Guide kind={r.last ? "end" : "branch"} />
              ) : (
                <Expander open={!closed.includes(i)} last={r.last} label={r.text} onToggle={() => toggle(i)} />
              ))}
            <Icon name={r.icon} />
            <span className={`whitespace-pre pl-[5px] ${r.linked ? "text-[#1a14d2]" : "text-black"}`}>{r.text}</span>
          </div>
          {r.bar && <div className="absolute inset-x-0 top-[17px] h-[3px] border-t border-[#7ea6dc] bg-[#1b4f9c]" />}
        </li>
      ))}
    </ul>
  );
}

function ScrollBar({ thumb }: { thumb: string }) {
  return (
    <div className="flex h-4 shrink-0 items-center border-t border-white bg-[#ececee]">
      <button aria-label="Nach links" className="flex w-[17px] justify-center">
        <svg viewBox="0 0 4 7" className="h-[7px] w-1"><path d="M4 0v7L0 3.500z" fill="#333" /></svg>
      </button>
      <div className="flex grow">
        <div className={`flex h-[15px] items-center justify-center gap-[2px] rounded-sm border border-[#9a9a9e] bg-linear-to-b from-[#f6f6f6] to-[#cfcfd3] ${thumb}`}>
          <span className="h-[7px] w-px bg-[#555]" />
          <span className="h-[7px] w-px bg-[#555]" />
          <span className="h-[7px] w-px bg-[#555]" />
        </div>
      </div>
      <button aria-label="Nach rechts" className="flex w-[13px] justify-center">
        <svg viewBox="0 0 4 7" className="h-[7px] w-1"><path d="M0 0v7l4-3.500z" fill="#333" /></svg>
      </button>
    </div>
  );
}

function FeaturePanel({ tabs, rows, label, menu, thumb }: { tabs: string[]; rows: Row[]; label: string; menu?: boolean; thumb: string }) {
  const [active, setActive] = useState(0);
  return (
    <div className="flex h-full flex-col bg-[#e0e3ec]">
      <div className="h-[3px] shrink-0 border-y border-[#74788e] bg-[#e4e6f2]" />
      <div className="flex h-[27px] shrink-0 items-end gap-0.5 border-b border-[#74788e] bg-[#ced2e7] pl-px">
        {tabs.map((t, i) => (
          <button
            key={t}
            aria-label={t}
            onClick={() => setActive(i)}
            className={`flex h-[22px] w-[26px] items-center justify-center rounded-t-[4px] border border-b-0 border-[#7e829a] ${i === active ? "bg-[#e6e9f5]" : "bg-linear-to-b from-[#b9bdd2] to-[#a3a7be]"}`}
          >
            <Icon name={t} />
          </button>
        ))}
        {menu && <button aria-label="Anzeigebereich" className="ml-auto pb-1 pr-1 text-[20px] leading-4 text-[#444a60]">»</button>}
      </div>
      <div className="flex h-[21px] shrink-0 items-center px-px">
        <label className="flex h-[18px] w-full items-center rounded-full border border-[#777b8c] bg-linear-to-b from-[#dfe1ea] to-white pl-1.5">
          <Icon name="funnel" className="h-3.5 w-3.5" />
          {menu && <Arrow />}
          <input aria-label={label} className="w-full min-w-0 bg-transparent px-1 outline-none" />
        </label>
      </div>
      <Tree rows={rows} />
      <div className="grow" />
      <ScrollBar thumb={thumb} />
      <div className="h-[3px] shrink-0 border-b border-[#74788e]" />
    </div>
  );
}

const grain = [
  { d: "M520 287C590 300 640 330 683 336S800 362 862 382", o: 0.8, w: 5 },
  { d: "M514 304C580 318 640 342 700 351S800 378 855 392", o: 0.35, w: 4 },
  { d: "M508 315C570 328 630 350 690 362S790 392 850 408", o: 0.5, w: 4 },
  { d: "M503 331C560 345 620 364 680 372S780 405 845 422", o: 0.6, w: 5 },
  { d: "M497 347C560 358 610 380 680 394S780 420 838 436", o: 0.4, w: 4 },
  { d: "M490 363C560 378 610 398 665 410S770 436 830 453", o: 0.6, w: 4 },
  { d: "M482 380C540 396 600 412 640 426S760 452 826 472", o: 0.7, w: 5 },
  { d: "M475 399C530 406 580 428 625 444S740 472 818 490", o: 1, w: 6 },
  { d: "M465 421C520 436 570 446 620 465S740 494 810 518", o: 0.8, w: 5 },
  { d: "M455 441C500 455 560 468 610 486S730 520 800 542", o: 0.8, w: 5 },
  { d: "M443 469C500 482 550 496 600 514S700 546 786 570", o: 0.8, w: 6 },
  { d: "M433 498C490 514 540 532 600 548S690 574 776 600", o: 0.8, w: 6 },
  { d: "M420 531C470 546 510 566 560 576S670 608 762 634", o: 0.9, w: 7 },
];

function Triad() {
  return (
    <g>
      <path d="M403 699L408 684" stroke="#1d5a22" strokeWidth="4" />
      <path d="M404 683l8-9 1 12z" fill="#164a1a" />
      <path d="M403 699L401 688" stroke="#14147c" strokeWidth="4" />
      <ellipse cx="401" cy="688" rx="4" ry="4.500" fill="#1818c8" />
      <path d="M403 699l19 5" stroke="#c81a1a" strokeWidth="4" />
      <path d="M419 699l11 7-12 3z" fill="#d01c1c" />
      <g fontFamily="Liberation Sans, sans-serif" fontSize="10">
        <text x="409" y="673" fill="#157a1c">Y</text>
        <text x="396" y="684" fill="#1414c0">Z</text>
        <text x="430" y="711" fill="#c81a1a">X</text>
      </g>
    </g>
  );
}

function Model() {
  return (
    <svg viewBox="362 109 804 648" preserveAspectRatio="xMinYMin meet" className="h-full w-full" role="img" aria-label="Kieferteil11">
      <defs>
        <clipPath id="board"><path d="M522 271l344 98-117 288-344-97z" /></clipPath>
        <filter id="soft"><feGaussianBlur stdDeviation="1.800" /></filter>
      </defs>
      <path d="M522 271l344 98-117 288-344-97z" fill="#7e7263" />
      <g clipPath="url(#board)">
        <g filter="url(#soft)" fill="none" stroke="#8c6032">
          {grain.map((g) => <path key={g.d} d={g.d} opacity={g.o * 0.8} strokeWidth={g.w} />)}
          <path d="M560 284l120 34" opacity=".5" strokeWidth="5" />
        </g>
      </g>
      <path d="M866 370L522 271 405 560l344 96" fill="none" stroke="#0a0a0a" strokeWidth="1.200" />
      <path d="M405 562l344 96" stroke="#0a0a0a" />
      <path d="M811 506l-62 152" stroke="#0a0a0a" strokeWidth="1.600" strokeDasharray="3 1" />
      <g fill="none" stroke="#858585" strokeWidth="2">
        <path d="M683 319l183 51-55 136-183-51z" stroke="#82827f" />
        <path d="M798 327l193 55-36 89-193-54z" />
      </g>
      <g fill="#7c7c7c">
        {[[798, 327], [991, 382], [955, 471], [866, 370], [811, 506], [762, 417], [683, 319], [628, 455]].map(([x, y]) => (
          <circle key={`${x}-${y}`} cx={x} cy={y} r="2.500" />
        ))}
      </g>
      <Triad />
    </svg>
  );
}

function ViewToolbar() {
  return (
    <div className="absolute inset-x-0 top-0.5 flex h-[23px] justify-center pr-1.5">
      {viewTools.map((t) => (
        <div key={t.icon} className="flex">
          <button aria-label={t.label} className="flex w-[23px] items-center justify-center"><Icon name={t.icon} /></button>
          {t.menu && <button aria-label={`${t.label} Menü`} className="flex w-[10px] items-center justify-center"><Arrow /></button>}
        </div>
      ))}
    </div>
  );
}

function PartWindow() {
  return (
    <section className="absolute left-px top-[338px] flex h-[440px] w-[780px] flex-col rounded-t-md border border-[#3d4257] bg-linear-to-b from-[#bccbd9] to-[#dbe7f3] to-10% px-[6px]">
      <header className="flex h-[28px] shrink-0 items-center gap-1 pl-0.5 pt-1.5 text-[#4c5668]">
        <Icon name="part" />
        <h2>Kieferteil11.SLDPRT</h2>
      </header>
      <div className="flex min-h-0 grow">
        <div className="w-[210px] shrink-0 border-r-[3px] border-[#6d7187]">
          <div className="h-[400px]">
            <FeaturePanel tabs={["part", "propTab", "configTab", "dimTab"]} rows={partTree} label="Teil filtern" thumb="w-[112px]" />
          </div>
        </div>
        <div className="grow overflow-hidden bg-linear-to-b from-[#c0c0c0] to-white">
          <svg viewBox="0 0 556 400" className="h-[400px] w-[556px]" aria-hidden="true">
            <path d="M46 344l20 5" stroke="#c81a1a" strokeWidth="4" />
            <path d="M58 344l11 6-12 3z" fill="#d01c1c" />
            <text x="67" y="354" fontSize="10" fill="#c81a1a" fontFamily="Liberation Sans, sans-serif">X</text>
          </svg>
        </div>
      </div>
    </section>
  );
}

const capButton = "flex h-[17px] w-[31px] items-center justify-center rounded-[3px] border shadow-[inset_0_0_0_1px_rgba(255,255,255,0.5)]";

function AssemblyWindow() {
  const [sheet, setSheet] = useState("Modell");
  return (
    <section className="absolute left-[114px] top-[15px] flex h-[700px] w-[1009px] flex-col rounded-t-md border border-black bg-linear-to-b from-[#e4eef9] to-[#b9d1ea] from-15% to-18% px-[7px] pb-[7px] shadow-[inset_-1px_-1px_0_#35b8c8,inset_1px_1px_0_#eaf4fd]">
      <header className="-mx-[6px] mt-px flex h-[27px] shrink-0 items-center rounded-t bg-linear-to-b from-[#98b3d0] to-[#b7cfe8] px-2">
        <Icon name="assembly" />
        <h2 className="grow pl-1 pt-1">Kieferteil11 -in- Baugruppe11.SLDASM *</h2>
        <div className="flex gap-[3px] pt-1">
          <button aria-label="Minimieren" className={`${capButton} border-[#53708f] bg-linear-to-b from-[#c5d8ec] to-[#a2bdd9]`}>
            <span className="mt-1 h-[5px] w-[11px] rounded-[1px] border border-[#4a5566] bg-white" />
          </button>
          <button aria-label="Maximieren" className={`${capButton} border-[#53708f] bg-linear-to-b from-[#c5d8ec] to-[#a2bdd9]`}>
            <span className="flex h-[9px] w-[11px] items-center justify-center rounded-[1px] border border-[#4a5566] bg-white">
              <span className="h-[3px] w-[5px] border border-[#4a5566]" />
            </span>
          </button>
          <button aria-label="Schließen" className={`${capButton} border-[#4a1420] bg-linear-to-b from-[#e5a294] from-45% to-[#b9402c] to-55%`}>
            <svg viewBox="0 0 10 8" className="h-2 w-2.5"><path d="M1.500 1l7 6M8.500 1l-7 6" stroke="#4a3038" strokeWidth="3.600" /><path d="M1.500 1l7 6M8.500 1l-7 6" stroke="#fff" strokeWidth="2.200" /></svg>
          </button>
        </div>
      </header>
      <div className="flex min-h-0 grow">
        <div className="w-[189px] shrink-0 border-r-2 border-[#5d6179]">
          <FeaturePanel tabs={["assembly", "propTab", "configTab", "ball"]} rows={assemblyTree} label="Baugruppe filtern" menu thumb="w-[76px]" />
        </div>
        <div className="relative grow bg-linear-to-b from-[#bebebe] to-white">
          <Model />
          <ViewToolbar />
          <button aria-label="Bearbeiten beenden" className="absolute right-4 top-3.5 opacity-40">
            <svg viewBox="0 0 46 48" className="h-12 w-[46px]" fill="none">
              <path d="M1 8l12-7 8 3v8l7 4v7l-9 6L1 17z" fill="#e6cf6a" stroke="#b79a3c" />
              <path d="M1 8l9 5v10M19 28v-8" stroke="#b79a3c" />
              <path d="M12 7l8-4 8 3v10l-8 4-8-4z" fill="#8fb0e8" stroke="#5f7fc0" />
              <path d="M12 7l8 3 8-4M20 10v10" stroke="#5f7fc0" />
              <path d="M32 22c9-1 11 13 2 16v6l-8-8 8-8v5c4-2 3-7-2-11z" fill="#c08ad0" stroke="#9a62ac" />
            </svg>
          </button>
          <button aria-label="Bereich einklappen" className="absolute -left-0.5 top-[310px] flex h-7 w-[10px] flex-col items-center justify-evenly rounded-r border border-l-0 border-[#5d6179] bg-[#d6d9e6]">
            {[0, 1, 2].map((n) => (
              <svg key={n} viewBox="0 0 4 6" className="h-[6px] w-1"><path d="M4 0v6L0 3z" fill="#4a4f78" /></svg>
            ))}
          </button>
        </div>
      </div>
      <footer className="flex h-[15px] shrink-0 border-t border-black bg-[#e0e3ec] font-['Liberation_Sans',Arial,sans-serif]">
        <div className="flex w-[68px] bg-[#9da1b8] pl-px">
          {["M4.5 2v8M11 2v8L6 6z", "M9.5 2v8L5 6z", "M5.5 2v8L10 6z", "M10.5 2v8M4 2v8l5-4z"].map((d, i) => (
            <button key={d} aria-label={`Blatt ${i + 1}`} className="flex w-4 justify-center border border-[#7b7f96]">
              <svg viewBox="0 0 15 12" className="h-3 w-[15px]"><path d={d} fill="#7a7e9a" stroke="#7a7e9a" /></svg>
            </button>
          ))}
        </div>
        {["Modell", "Bewegungsstudie 1"].map((name) => (
          <button
            key={name}
            onClick={() => setSheet(name)}
            className={`border border-t-0 border-[#33364a] leading-[13px] ${name === "Modell" ? "w-[59px]" : "w-[131px] pr-1"} ${name === sheet ? "bg-[#d9dcea] font-bold" : "bg-[#b4b8cd] shadow-[1px_0_0_#777b90]"}`}
          >
            {name}
          </button>
        ))}
      </footer>
    </section>
  );
}

function TitleBar() {
  return (
    <header className="flex h-[29px] shrink-0 items-stretch border-b border-[#5a5e73] bg-linear-to-b from-[#f1f2fd] to-[#b9bdd3]">
      <div className="flex w-[125px] items-center gap-0.5 bg-linear-to-b from-[#dfe1ec] to-[#a9adc2] pl-[3px]">
        <svg viewBox="0 0 22 22" className="h-[22px] w-[22px] shrink-0">
          <path d="M1 5l10-4 10 4v12l-10 4L1 17z" fill="#c8161d" />
          <path d="M1 5l10-4 10 4-10 3z" fill="#f2555a" />
          <path d="M11 8l10-3v12l-10 4z" fill="#98090f" />
          <text x="1.500" y="16" fontSize="11" fontWeight="bold" fill="#fff" fontFamily="Liberation Sans, sans-serif">S</text>
          <text x="9.500" y="16" fontSize="11" fontWeight="bold" fill="#fff" fontFamily="Liberation Sans, sans-serif">W</text>
        </svg>
        <h1 className="text-[18px] leading-5 text-[#55555b]"><b className="font-bold text-[#2a2a2e]">Solid</b>Works</h1>
      </div>
      <button aria-label="Menü" className="flex w-[10px] items-center justify-center bg-[#7c80a0]">
        <svg viewBox="0 0 4 8" className="h-2 w-1"><path d="M0 0v8l4-4z" fill="#1c1e48" /></svg>
      </button>
      <nav aria-label="Datei" className="ml-7 flex items-center">
        {fileTools.map((t) => (
          <div key={t.icon} className="flex h-6 w-9 items-center">
            <button aria-label={t.label} className="flex w-[23px] justify-center"><Icon name={t.icon} /></button>
            <button aria-label={`${t.label} Menü`} className="flex w-[13px] justify-center"><Arrow /></button>
          </div>
        ))}
        <div className="flex h-[23px] w-9 items-stretch overflow-hidden rounded border border-[#6a6e84]">
          <button aria-label="Auswählen" className="flex grow items-center justify-center border-r border-[#6a6e84] bg-[#b7bad8]"><Icon name="pointer" /></button>
          <button aria-label="Auswählen Menü" className="flex w-3 items-center justify-center"><Arrow /></button>
        </div>
        <button aria-label="Modellneuaufbau" className="flex w-[23px] justify-center"><Icon name="traffic" /></button>
        <button aria-label="Optionen" className="flex w-[23px] justify-center"><Icon name="options" /></button>
        <button aria-label="Optionen Menü" className="flex w-[13px] justify-center"><Arrow /></button>
        <button aria-label="Normal auf" className="flex w-[23px] justify-center"><Icon name="normalTo" /></button>
        <button aria-label="Isometrisch" className="flex w-[23px] justify-center"><Icon name="viewCube" /></button>
      </nav>
      <p className="grow self-center pt-0.5 text-center text-[11px] text-[#2e3038]">Kieferteil11 -in- Baugruppe11.SLDASM *</p>
      <div className="my-[3px] flex w-[237px] items-center rounded border border-[#51566b] bg-linear-to-b from-[#dfe2ee] to-white pl-[5px]">
        <Icon name="helpBall" />
        <input aria-label="Hilfe durchsuchen" placeholder="SolidWorks Hilfe durchsuchen" className="min-w-0 grow bg-transparent pl-1 text-[11px] outline-none placeholder:text-[#565a66]" />
        <button aria-label="Suchen"><Icon name="search" /></button>
        <button aria-label="Suchoptionen" className="flex w-[18px] justify-center"><Arrow /></button>
      </div>
      <div className="flex w-[112px] items-center pl-[7px] text-[#6e7286]">
        <button aria-label="Hilfe" className="w-4 text-[16px] font-bold leading-4">?</button>
        <button aria-label="Hilfe Menü" className="flex w-5 justify-center"><Arrow /></button>
        <button aria-label="Minimieren" className="flex h-4 w-[22px] items-center justify-center pt-1"><span className="h-[3px] w-2 bg-[#7f8398]" /></button>
        <button aria-label="Maximieren" className="flex w-[22px] justify-center"><span className="h-[11px] w-3 border border-t-2 border-[#7f8398]" /></button>
        <button aria-label="Schließen" className="flex w-6 justify-center">
          <svg viewBox="0 0 10 10" className="h-2.5 w-2.5"><path d="M1 1l8 8M9 1L1 9" stroke="#7f8398" strokeWidth="2.400" /></svg>
        </button>
      </div>
    </header>
  );
}

const taskTabs = ["home", "library", "explorer", "palette", "ball", "props"];
const bar = "bg-linear-to-b from-[#f1f2fd] to-[#b9bdd0]";
const dots = "mx-auto mb-[6px] h-[3px] border-t-2 border-dotted border-[#8d91a5]";

export default function App() {
  return (
    <div className="h-screen bg-[#140a28] font-[Roboto,'Open_Sans',sans-serif] text-[12px] leading-[18px] text-black">
      <div className="flex h-full flex-col rounded-t-lg border border-[#17102a] bg-linear-to-b from-[#37285a] via-[#c9bcd0] via-20% to-[#8f76aa] to-30% px-[6px] pb-[5px] pt-[6px] shadow-[inset_0_0_0_1px_#c5bdd2]">
        <div className="flex min-h-0 grow flex-col border border-[#2c2542]">
          <TitleBar />
          <div className={`flex h-[28px] shrink-0 pl-px ${bar}`}>
            <div className="w-[294px] border-r border-[#9599ad]" />
            <div className="flex w-11 items-center border-l border-r border-l-white border-r-[#9599ad] pl-1">
              <div className="h-6 w-[3px] border-l-2 border-dotted border-[#8d91a5]" />
            </div>
            <div className="grow border-l border-white" />
          </div>

          <div className="flex min-h-0 grow">
            <aside className="flex w-[43px] shrink-0 flex-col bg-[#d9dcec]">
              <div className="flex h-[375px] shrink-0 border-b border-[#8d91a5] bg-linear-to-b from-[#f0f2fe] to-[#d5d8e8]">
                <div className="w-[31px] border-r border-[#9a9eb2] bg-linear-to-r from-[#edeffc] to-[#b4b8ce] pt-[5px]">
                  <div className={`${dots} w-6`} />
                  <ToolColumn tools={leftTop} />
                </div>
              </div>
              <div className="grow border-b border-[#8d91a5] bg-linear-to-r from-[#edeffc] to-[#b0b4ca] pt-1">
                <div className={`${dots} w-9`} />
                <ToolColumn tools={leftBottom} />
                <button aria-label="Mehr" className="flex h-[23px] w-full items-center justify-center">
                  <svg viewBox="0 0 8 9" className="h-[9px] w-2"><path d="M1 1l3 3 3-3M1 5l3 3 3-3" fill="none" stroke="#3c4052" /></svg>
                </button>
              </div>
            </aside>

            <main className="relative min-w-0 grow overflow-hidden bg-linear-to-r from-[#54566f] via-[#686b7b] to-[#767a85]">
              <PartWindow />
              <AssemblyWindow />
              <nav aria-label="Task-Fensterbereich" className="absolute right-0 top-[60px] flex flex-col">
                {taskTabs.map((t) => (
                  <button
                    key={t}
                    aria-label={t}
                    className={`flex h-6 w-6 items-center justify-center rounded-l-[3px] border border-r-0 border-[#8589a0] ${t === "palette" ? "bg-[#f0f2fd]" : "bg-linear-to-b from-[#c9cddd] to-[#a9adc0]"}`}
                  >
                    <Icon name={t} />
                  </button>
                ))}
              </nav>
            </main>

            <aside className="flex w-11 shrink-0 flex-col border-b border-[#8d91a5] bg-linear-to-b from-[#c5c9dc] to-[#b7bbcf]">
              <div className="shrink-0 border-b border-[#8d91a5] bg-linear-to-r from-[#edeffc] to-[#b0b4ca] pb-[7px] pt-[5px]">
                <div className={`${dots} w-9`} />
                <ToolColumn tools={rightTools} />
              </div>
            </aside>
          </div>

          <div className={`flex h-[30px] shrink-0 border-b border-[#8d91a5] ${bar}`}>
            <div className="flex w-[135px] items-center border-r border-[#9599ad] pl-1">
              <div className="h-6 w-2 border-l-2 border-dotted border-[#8d91a5]" />
              {["shadeOff", "paintOff", "weightOff", "styleOff", "colorMode"].map((t) => (
                <button key={t} aria-label={t} className="flex w-[23px] justify-center"><Icon name={t} /></button>
              ))}
            </div>
            <div className="grow border-l border-white" />
          </div>

          <footer className="flex h-5 shrink-0 items-center border-t border-[#6c7086] bg-linear-to-b from-[#d3d6e4] to-[#b3b7c9] pl-0.5">
            <span className="grow">SolidWorks Office 2011 x64 Edition</span>
            <span className="w-[209px]">X: 59.08mm Y: 50.47mm Z: 0mm</span>
            <span className="w-[72px]">Voll definiert</span>
            <div className="flex w-[43px] gap-[7px]">
              {[0, 1, 2, 3, 4].map((n) => <span key={n} className="h-4 w-px bg-[#e8eaf4]" />)}
            </div>
            <button aria-label="Schnelltipps" className="w-16"><Icon name="helpBox" /></button>
            <button aria-label="Tags" className="w-[39px]"><Icon name="tag" /></button>
            <svg viewBox="0 0 10 10" className="mt-1.5 h-2.5 w-2.5" aria-hidden="true">
              <path d="M7 1h2v2H7zM4 4h2v2H4zM7 4h2v2H7zM1 7h2v2H1zM4 7h2v2H4zM7 7h2v2H7z" fill="#eef0f8" />
            </svg>
          </footer>
        </div>
      </div>
    </div>
  );
}
